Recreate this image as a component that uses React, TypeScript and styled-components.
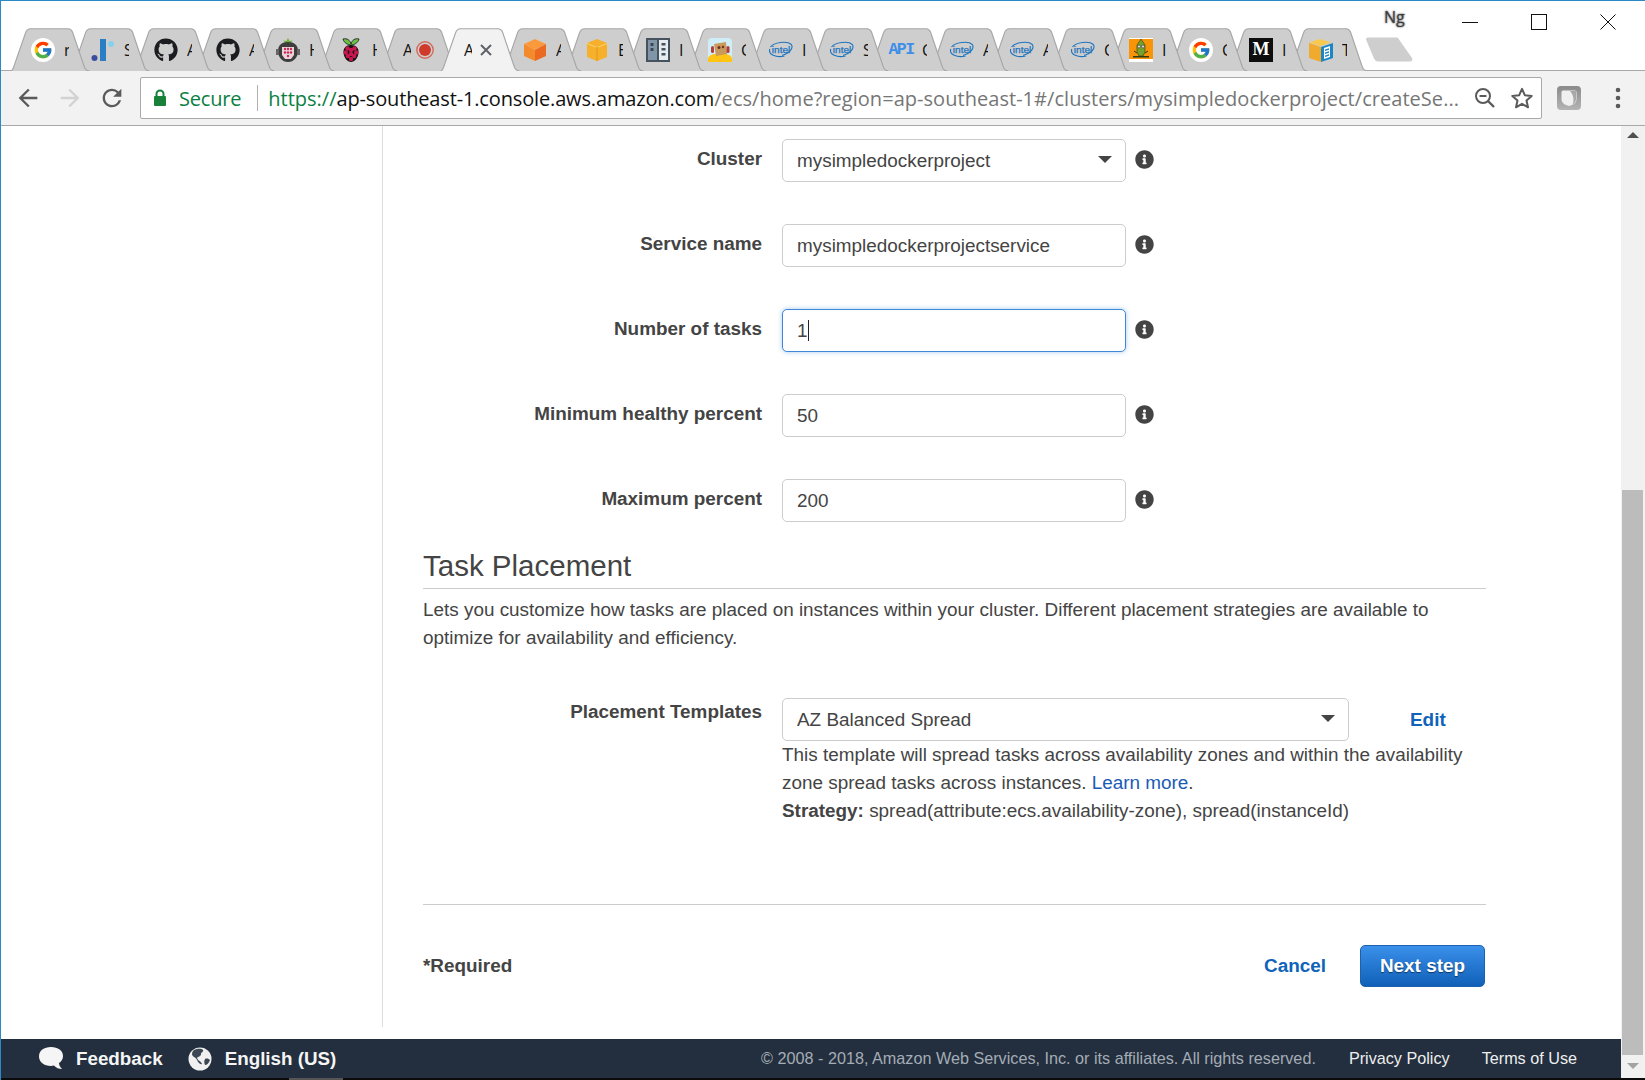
import React from "react";
import styled, { createGlobalStyle } from "styled-components";
import { FaGithub, FaInfoCircle } from "react-icons/fa";
import { FcGoogle } from "react-icons/fc";

const Global = createGlobalStyle`
  html, body { margin: 0; padding: 0; background: #fff; overflow: hidden; }
  * { box-sizing: border-box; }
`;

const Window = styled.div`
  width: 1645px; height: 1080px; display: flex; flex-direction: column;
  border-top: 1px solid #2a8ac5; border-left: 1px solid #2a8ac5; background: #fff;
  font-family: "Liberation Sans", Arial, sans-serif; color: #444; overflow: hidden;
`;
const TitleBar = styled.div`
  height: 70px; flex: none; display: flex; align-items: flex-end; position: relative;
  padding-left: 9px; background: #fff; border-bottom: 1px solid #a8a8a8;
`;
const TabStrip = styled.div`display: flex; align-items: flex-end; margin-bottom: -1px;`;
const TabBox = styled.div<{ $z: number; $gap: number; $after: number }>`
  position: relative; z-index: ${p => p.$z}; width: 80px; height: 43px; flex: none;
  margin-right: ${p => p.$after}px; display: flex; align-items: center; gap: ${p => p.$gap}px;
  padding: 0 0 0 21px; font-family: "Open Sans", sans-serif; font-size: 16px; color: #111;
  & > svg.shape { position: absolute; left: 0; top: 0; z-index: -1; }
`;
const TabLabel = styled.span<{ $w: number; $ml: number }>`
  display: block; width: ${p => p.$w}px; margin-left: ${p => p.$ml}px; overflow: hidden; white-space: nowrap; line-height: 20px; flex: none;
`;
const IconSlot = styled.span`width: 24px; height: 24px; flex: none; display: flex; align-items: center; justify-content: center;`;
const GoogleDisc = styled.span`
  width: 24px; height: 24px; border-radius: 50%; background: #fff; display: flex; align-items: center; justify-content: center;
`;
const NewTab = styled.svg`flex: none; margin: 0 0 8px 15px; position: relative; z-index: 30;`;
const Profile = styled.span`
  position: absolute; left: 1383px; top: 6px; font-family: "Open Sans", sans-serif; font-size: 16px; line-height: 20px;
  color: #3c3c3c; text-shadow: 0 0 2px #777, 0 0 2px #999;
`;
const WindowControls = styled.div`display: flex; margin-left: auto; margin-right: 3px; align-self: flex-start;`;
const WinBtn = styled.div`width: 69px; height: 42px; display: flex; align-items: center; justify-content: center;`;

const Toolbar = styled.div`
  height: 55px; flex: none; background: #f2f2f2; border-bottom: 1px solid #a8a8a8;
  display: flex; align-items: center; padding-left: 6px;
`;
const NavBtn = styled.div<{ $ml?: number }>`
  width: 42px; height: 42px; flex: none; display: flex; align-items: center; justify-content: center;
  margin-left: ${p => p.$ml ?? 0}px;
`;
const UrlBox = styled.div`
  width: 1402px; height: 42px; margin-left: 7px; flex: none; background: #fff; border: 1px solid #a9a9a9; border-radius: 2px;
  display: flex; align-items: center; padding-left: 12px; font-family: "Open Sans", sans-serif; font-size: 20px; white-space: nowrap;
`;
const Secure = styled.span`color: #0b8043; margin-left: 12px; letter-spacing: -0.2px;`;
const UrlDivider = styled.span`width: 1px; height: 26px; background: #b0b0b0; margin: 0 10px 0 16px;`;
const UrlScheme = styled.span`color: #0b8043;`;
const UrlHost = styled.span`color: #111; letter-spacing: -0.15px;`;
const UrlRest = styled.span`color: #767676; letter-spacing: 0.04px;`;
const UrlText = styled.span``;
const UrlIcons = styled.div`margin-left: auto; display: flex; align-items: center; gap: 14px; padding-right: 7px;`;

const Body = styled.div`flex: 1; display: flex; min-height: 0;`;
const MainColumn = styled.div`flex: 1; display: flex; flex-direction: column; min-width: 0;`;
const Content = styled.div`flex: 1; display: flex; padding-bottom: 12px; min-height: 0;`;
const Sidebar = styled.div`width: 382px; flex: none; border-right: 1px solid #ddd;`;
const Form = styled.div`width: 1063px; margin-left: 40px; padding-top: 13px; font-size: 18.9px; line-height: 28px;`;
const Row = styled.div<{ $top?: boolean }>`
  display: flex; align-items: ${p => (p.$top ? "flex-start" : "center")}; margin-bottom: ${p => (p.$top ? 0 : 42)}px;
  &:nth-child(5) { margin-bottom: 0; }
`;
const Label = styled.div<{ $top?: boolean }>`
  width: 339px; flex: none; text-align: right; font-weight: 700; font-size: 18.9px; color: #444; margin-right: 20px;
  line-height: 24px; padding-bottom: ${p => (p.$top ? 0 : 3)}px; padding-top: ${p => (p.$top ? 2 : 0)}px;
`;
const Field = styled.div<{ $focus?: boolean; $wide?: boolean }>`
  position: relative; width: ${p => (p.$wide ? 567 : 344)}px; height: 43px; flex: none; background: #fff;
  border: 1px solid ${p => (p.$focus ? "#3f87d8" : "#ccc")}; border-radius: 5px; padding-left: 14px; display: flex; align-items: center;
  font-size: 18.9px; color: #444; box-shadow: ${p => (p.$focus ? "0 0 5px rgba(63,135,216,.45)" : "none")};
`;
const Caret = styled.span`
  position: absolute; right: 13px; top: 16px; width: 0; height: 0;
  border-left: 7px solid transparent; border-right: 7px solid transparent; border-top: 7px solid #444;
`;
const TextCursor = styled.span`width: 1px; height: 21px; background: #222; margin-left: 0;`;
const InfoSlot = styled.span`margin: 0 0 3px 9px; display: flex; color: #444; font-size: 19px;`;
const Heading = styled.h2`
  margin: 23px 0 0; font-weight: 400; font-size: 29.5px; line-height: 41px; height: 44px; color: #444; border-bottom: 1px solid #ccc;
`;
const Para = styled.p`margin: 7px 0 46px; width: 1010px; color: #444;`;
const SelectCol = styled.div`width: 567px; flex: none;`;
const HelpText = styled.div`color: #444; white-space: nowrap;`;
const Strong = styled.strong`font-weight: 700;`;
const Learn = styled.span`color: #1a5bb5;`;
const EditLink = styled.span`margin: 8px 0 0 61px; color: #0f63b9; font-weight: 700;`;
const Rule = styled.div`height: 1px; background: #ccc; margin-top: 79px;`;
const Actions = styled.div`display: flex; align-items: center; margin-top: 40px;`;
const Required = styled.span`font-weight: 700; color: #444;`;
const CancelLink = styled.span`margin-left: auto; color: #0f63b9; font-weight: 700;`;
const NextButton = styled.div`
  width: 125px; height: 42px; margin: 0 1px 0 34px; border-radius: 5px; border: 1px solid #1a62ae;
  background: linear-gradient(#3a90ea, #1060b8); color: #fff; font-weight: 700; display: flex; align-items: center; justify-content: center;
  text-shadow: 0 1px 1px rgba(0,0,0,.5);
`;
const Footer = styled.div`
  height: 39px; flex: none; background: #232f3e; color: #f2f2f2; display: flex; align-items: center; font-size: 18.8px; padding-left: 37px;
`;
const FootItem = styled.span<{ $ml?: number }>`font-weight: 700; margin-left: ${p => p.$ml ?? 0}px; color: #f5f5f5;`;
const FootIcon = styled.svg<{ $ml?: number }>`flex: none; margin-left: ${p => p.$ml ?? 0}px;`;
const Copyright = styled.span`margin-left: auto; font-size: 16.2px; color: #a4acb5;`;
const FootLink = styled.span<{ $ml: number }>`margin-left: ${p => p.$ml}px; color: #eee; font-size: 16.2px;`;
const FootEnd = styled.span`width: 44px; flex: none;`;
const Scrollbar = styled.div`
  width: 24px; flex: none; background: #f1f1f1; display: flex; flex-direction: column; align-items: center; position: relative;
`;
const ArrowUp = styled.span`
  margin-top: 6px; width: 0; height: 0; border-left: 6px solid transparent; border-right: 6px solid transparent; border-bottom: 6px solid #505050;
`;
const Thumb = styled.div`width: 21px; height: 565px; margin-top: 352px; margin-left: -2px; background: #bcbcbc;`;
const ArrowDown = styled.span`
  margin-top: 8px; width: 0; height: 0; border-left: 6px solid transparent; border-right: 6px solid transparent; border-top: 6px solid #a3a3a3;
`;
const Taskbar = styled.div`height: 2px; flex: none; background: #0b0b0b; padding-left: 288px;`;
const TaskItem = styled.div`width: 54px; height: 2px; background: #555;`;

/* ---------- tab icons ---------- */
const Google = () => <GoogleDisc><FcGoogle size={20} /></GoogleDisc>;
const Bars = () => (
  <svg width="24" height="24" viewBox="0 0 24 24">
    <circle cx="3.5" cy="20" r="3" fill="#3a4ea0" /><rect x="9" y="1" width="6" height="22" fill="#2a7fc4" /><circle cx="20" cy="6" r="3" fill="#85d0ee" />
  </svg>
);
const Github = () => <FaGithub size={24} color="#1b1c1f" />;
const Cooker = () => (
  <svg width="24" height="24" viewBox="0 0 24 24">
    <path d="M12 0l1.500 3 3-.5-2 3h-5l-2-3 3 .5z" fill="#6fb03a" />
    <path d="M12 4c6 0 10 3 10 9s-4 11-10 11S2 19 2 13s4-9 10-9z" fill="#3d3d3d" /><rect x="0" y="11" width="3" height="6" fill="#666" /><rect x="21" y="11" width="3" height="6" fill="#666" />
    <path d="M6 9h12v8l-3 4H9l-3-4z" fill="#ecd3d8" />
    {[[9, 11], [12, 11], [15, 11], [9, 14.5], [12, 14.5], [15, 14.5], [12, 18]].map(([x, y], i) => <circle key={i} cx={x} cy={y} r="1.200" fill="#cc2a5c" />)}
  </svg>
);
const Raspberry = () => (
  <svg width="20" height="24" viewBox="0 0 20 24">
    <path d="M10 7C7 7 3 5 2 1c4-1 7 1 8 5 1-4 4-6 8-5-1 4-5 6-8 6z" fill="#6cc04a" stroke="#111" strokeWidth=".8" />
    <path d="M10 7c5 0 8 3 7.500 8-.5 5-4 9-7.500 9s-7-4-7.500-9C2 10 5 7 10 7z" fill="#111" />
    {[[6.500, 10.500], [13.500, 10.500], [10, 12], [4.800, 14.500], [15.200, 14.500], [10, 16], [6.800, 18], [13.200, 18], [10, 21]].map(([x, y], i) => <circle key={i} cx={x} cy={y} r="2.200" fill="#c8174f" />)}
  </svg>
);
const RecordDot = () => (
  <svg width="18" height="18" viewBox="0 0 18 18"><circle cx="9" cy="9" r="8.200" fill="none" stroke="#d26a5c" strokeWidth="1.400" /><circle cx="9" cy="9" r="6" fill="#cf3a2a" /></svg>
);
const Close = () => (
  <svg width="16" height="16" viewBox="0 0 16 16"><path d="M3 3l10 10M13 3L3 13" stroke="#5f6368" strokeWidth="2" /></svg>
);
const OrangeCube = () => (
  <svg width="24" height="24" viewBox="0 0 24 24"><path d="M12 1l11 5-11 6L1 6z" fill="#fb9a3c" /><path d="M1 6l11 6v11L1 18z" fill="#f58a2c" /><path d="M23 6l-11 6v11l11-5z" fill="#ea6a22" /></svg>
);
const YellowBox = () => (
  <svg width="24" height="24" viewBox="0 0 24 24"><path d="M12 1l10 4v14l-10 4L2 19V5z" fill="#f6b02c" /><path d="M2 5l10 4 10-4v1l-10 4L2 6z" fill="#fbd46e" /><rect x="11.200" y="9" width="1.600" height="14" fill="#e8a022" /></svg>
);
const Shelf = () => (
  <svg width="24" height="24" viewBox="0 0 24 24">
    <rect width="24" height="24" fill="#46535e" /><rect x="2" y="2" width="9" height="20" fill="#8096a8" /><rect x="13" y="2" width="9" height="20" fill="#e6ecef" />
    <rect x="4.500" y="5" width="3" height="3" fill="#3c4650" /><rect x="4.500" y="10" width="3" height="3" fill="#3c4650" />
    <rect x="15.500" y="5" width="4" height="2.500" fill="#46535e" /><rect x="15.500" y="10" width="4" height="2.500" fill="#46535e" /><rect x="15.500" y="15" width="4" height="2.500" fill="#46535e" />
  </svg>
);
const RobotTile = () => (
  <svg width="24" height="24" viewBox="0 0 24 24">
    <rect width="24" height="24" rx="4" fill="#cfeef8" /><path d="M0 24v-3c0-3 4-5 7-5h10c3 0 7 2 7 5v3z" fill="#ffc414" />
    <path d="M6 6l12-2 1 12-11 2z" fill="#c99a5c" /><rect x="3" y="8" width="3" height="7" rx="1.500" fill="#b33c3c" /><rect x="18.500" y="8" width="3" height="7" rx="1.500" fill="#b33c3c" />
    <circle cx="11" cy="9.500" r="1.500" fill="#703020" /><circle cx="15" cy="9" r="1.200" fill="#703020" />
  </svg>
);
const IntelMark = () => (
  <svg width="24" height="18" viewBox="0 0 24 18">
    <path d="M1.500 6C5 1.500 18-.5 22.300 3.500c2.500 3.500-2 9-9.300 11" fill="none" stroke="#1d74bd" strokeWidth="1.100" />
    <path d="M.8 8C-1 13.500 7 17 15.500 15" fill="none" stroke="#1d74bd" strokeWidth="1.100" />
    <text x="2.800" y="12" fontFamily="'Liberation Sans', sans-serif" fontSize="9.500" fill="#1d74bd" stroke="#1d74bd" strokeWidth=".25" textLength="18.500" lengthAdjust="spacingAndGlyphs">intel</text>
  </svg>
);
const ApiMark = styled.span`font-family: "Liberation Mono", monospace; font-weight: 700; font-size: 16.500px; color: #3d8fe8; letter-spacing: -1.500px; white-space: nowrap; line-height: 24px;`;
const GreenBot = () => (
  <svg width="24" height="24" viewBox="0 0 24 24">
    <rect width="24" height="24" fill="#fff" /><rect y="1" width="24" height="20" fill="#f89406" />
    <path d="M12 1l4 6v7l-2 4h-4l-2-4V7z" fill="#76a22c" stroke="#2b3a10" strokeWidth=".6" /><circle cx="10" cy="8.500" r="1.500" fill="#ddd" stroke="#222" strokeWidth=".5" /><circle cx="14" cy="8.500" r="1.500" fill="#ddd" stroke="#222" strokeWidth=".5" />
    <path d="M4 18h16v1.500H4z" fill="#2b3a10" /><path d="M5 13l3 2M19 13l-3 2" stroke="#2b3a10" />
  </svg>
);
const MediumTile = styled.span`
  width: 24px; height: 24px; background: #0e0e0e; color: #fff; display: flex; align-items: center; justify-content: center;
  font-family: "Liberation Serif", serif; font-weight: 700; font-size: 18px;
`;
const BlueBox = () => (
  <svg width="24" height="24" viewBox="0 0 24 24">
    <path d="M11 1l11 3.500L11 8 0 4.500z" fill="#f9c94e" /><path d="M0 5l12 4v15L0 20z" fill="#f0aa2e" /><path d="M12 9l12-4v15l-12 4z" fill="#1a86c8" />
    <path d="M15 10l6-2v11l-6 2z" fill="#fff" /><path d="M16 11.500l4-1.300v1.500l-4 1.300zM16 14.500l4-1.300v1.500l-4 1.300zM16 17.500l4-1.300v1.500l-4 1.300z" fill="#1a86c8" />
  </svg>
);

type TabDef = { icon: React.ReactNode; label: string; left: number; after?: boolean; active?: boolean };
const tabs: TabDef[] = [
  { left: 10, icon: <Google />, label: "r", after: true },
  { left: 70, icon: <Bars />, label: "S", after: true },
  { left: 133, icon: <Github />, label: "A", after: true },
  { left: 195, icon: <Github />, label: "A", after: true },
  { left: 255, icon: <Cooker />, label: "H", after: true },
  { left: 318, icon: <Raspberry />, label: "H", after: true },
  { left: 379, icon: <RecordDot />, label: "A" },
  { left: 440, icon: <Close />, label: "A", active: true },
  { left: 502, icon: <OrangeCube />, label: "A", after: true },
  { left: 564, icon: <YellowBox />, label: "E", after: true },
  { left: 625, icon: <Shelf />, label: "I", after: true },
  { left: 687, icon: <RobotTile />, label: "C", after: true },
  { left: 748, icon: <IntelMark />, label: "I", after: true },
  { left: 809, icon: <IntelMark />, label: "S", after: true },
  { left: 868, icon: <ApiMark>API</ApiMark>, label: "C", after: true },
  { left: 929, icon: <IntelMark />, label: "A", after: true },
  { left: 989, icon: <IntelMark />, label: "A", after: true },
  { left: 1050, icon: <IntelMark />, label: "C", after: true },
  { left: 1108, icon: <GreenBot />, label: "I", after: true },
  { left: 1168, icon: <Google />, label: "C", after: true },
  { left: 1228, icon: <MediumTile>M</MediumTile>, label: "I", after: true },
  { left: 1288, icon: <BlueBox />, label: "T", after: true },
];

const Tab = ({ def, z, after }: { def: TabDef; z: number; after: number }) => (
  <TabBox $z={def.active ? 25 : z} $gap={def.after ? 9 : 2} $after={after}>
    <svg className="shape" width="80" height="43" viewBox="0 0 80 43">
      <path
        d="M0.500 43 C1.500 43 2.500 42 3.500 39.500 L15.500 5 C16.500 2 18 .8 20.500 .8 L58 .8 C60 .8 61.500 1.500 62.500 4 L74 38 C75 41.500 76.500 43 79.500 43"
        fill={def.active ? "#f2f2f2" : "#cecece"} stroke="#a6a6a6" strokeWidth="1.100"
      />
    </svg>
    {def.after ? (
      <>
        <IconSlot>{def.icon}</IconSlot>
        <TabLabel $w={5} $ml={0}>{def.label}</TabLabel>
      </>
    ) : (
      <>
        <TabLabel $w={8} $ml={3}>{def.label}</TabLabel>
        <IconSlot>{def.icon}</IconSlot>
      </>
    )}
  </TabBox>
);

const iconGray = "#5a5a5a";
const Info = () => <InfoSlot><FaInfoCircle /></InfoSlot>;

export default function App() {
  return (
    <Window>
      <Global />
      <TitleBar>
        <TabStrip>
          {tabs.map((t, i) => (
            <Tab key={i} def={t} z={22 - i} after={(i < tabs.length - 1 ? tabs[i + 1].left - t.left : 61) - 80} />
          ))}
        </TabStrip>
        <NewTab width="50" height="25" viewBox="0 0 50 25">
          <path d="M2 2.500C2 1 3 .5 4 .5h28c1.500 0 2.500 .5 3 2L48 21c1 2 0 3.500-2 3.500H14c-2 0-3-1-4-3z" fill="#cecece" />
        </NewTab>
        <Profile>Ng</Profile>
        <WindowControls>
          <WinBtn>
            <svg width="16" height="16" viewBox="0 0 16 16"><path d="M0 8.500h16" stroke="#111" /></svg>
          </WinBtn>
          <WinBtn>
            <svg width="16" height="16" viewBox="0 0 16 16"><rect x=".5" y=".5" width="15" height="15" fill="none" stroke="#111" /></svg>
          </WinBtn>
          <WinBtn>
            <svg width="16" height="16" viewBox="0 0 16 16"><path d="M.5.5l15 15M15.500.5l-15 15" stroke="#111" /></svg>
          </WinBtn>
        </WindowControls>
      </TitleBar>
      <Toolbar>
        <NavBtn>
          <svg width="28" height="28" viewBox="0 0 24 24"><path d="M20 11H7.830l5.590-5.590L12 4l-8 8 8 8 1.410-1.410L7.830 13H20v-2z" fill={iconGray} /></svg>
        </NavBtn>
        <NavBtn>
          <svg width="28" height="28" viewBox="0 0 24 24"><path d="M4 11h12.170l-5.590-5.590L12 4l8 8-8 8-1.410-1.410L16.170 13H4v-2z" fill="#d2d2d2" /></svg>
        </NavBtn>
        <NavBtn>
          <svg width="28" height="28" viewBox="0 0 24 24"><path d="M17.650 6.350A7.958 7.958 0 0 0 12 4c-4.420 0-7.990 3.580-7.990 8s3.570 8 7.990 8c3.730 0 6.840-2.550 7.730-6h-2.080A5.990 5.990 0 0 1 12 18c-3.310 0-6-2.690-6-6s2.690-6 6-6c1.660 0 3.140.69 4.220 1.780L13 11h7V4l-2.350 2.350z" fill={iconGray} /></svg>
        </NavBtn>
        <UrlBox>
          <svg width="14" height="18" viewBox="0 0 14 18"><path d="M3.500 8V5a3.500 3.500 0 0 1 7 0v3" fill="none" stroke="#188038" strokeWidth="2" /><rect x="1" y="7" width="12" height="10" rx="1" fill="#188038" /></svg>
          <Secure>Secure</Secure>
          <UrlDivider />
          <UrlText>
            <UrlScheme>https://</UrlScheme><UrlHost>ap-southeast-1.console.aws.amazon.com</UrlHost><UrlRest>/ecs/home?region=ap-southeast-1#/clusters/mysimpledockerproject/createSe...</UrlRest>
          </UrlText>
          <UrlIcons>
            <svg width="22" height="22" viewBox="0 0 22 22"><circle cx="9" cy="9" r="7" fill="none" stroke={iconGray} strokeWidth="2" /><path d="M14 14l6 6" stroke={iconGray} strokeWidth="2.400" /><path d="M5.500 9h7" stroke={iconGray} strokeWidth="2" /></svg>
            <svg width="24" height="24" viewBox="0 0 24 24"><path d="M12 2.800l2.800 6.400 6.900.7-5.200 4.600 1.500 6.800-6-3.500-6 3.500 1.500-6.800-5.200-4.600 6.900-.7z" fill="none" stroke={iconGray} strokeWidth="2" strokeLinejoin="round" /></svg>
          </UrlIcons>
        </UrlBox>
        <NavBtn $ml={6}>
          <svg width="24" height="24" viewBox="0 0 24 24">
            <defs><linearGradient id="ext" x1="0" y1="0" x2="0" y2="1"><stop offset="0" stopColor="#8a8a8a" /><stop offset="1" stopColor="#b5b5b5" /></linearGradient></defs>
            <rect width="24" height="24" rx="4" fill="url(#ext)" /><path d="M4.500 6c0-1 1-1.500 2-1.500h11c1 0 2 .5 2 1.500v7c0 4-3.500 6-7.500 7-4-1-7.500-3-7.500-7z" fill="#f0f0f0" /><path d="M13 5h6v8c0 2-1 4-3.500 5.500 2-4.500 1-9.500-2.500-13.500z" fill="#a8a8a8" />
          </svg>
        </NavBtn>
        <NavBtn $ml={7}>
          <svg width="6" height="22" viewBox="0 0 6 22"><circle cx="3" cy="3" r="2.300" fill={iconGray} /><circle cx="3" cy="11" r="2.300" fill={iconGray} /><circle cx="3" cy="19" r="2.300" fill={iconGray} /></svg>
        </NavBtn>
      </Toolbar>
      <Body>
        <MainColumn>
          <Content>
            <Sidebar />
            <Form>
              <Row><Label>Cluster</Label><Field>mysimpledockerproject<Caret /></Field><Info /></Row>
              <Row><Label>Service name</Label><Field>mysimpledockerprojectservice</Field><Info /></Row>
              <Row><Label>Number of tasks</Label><Field $focus>1<TextCursor /></Field><Info /></Row>
              <Row><Label>Minimum healthy percent</Label><Field>50</Field><Info /></Row>
              <Row><Label>Maximum percent</Label><Field>200</Field><Info /></Row>
              <Heading>Task Placement</Heading>
              <Para>Lets you customize how tasks are placed on instances within your cluster. Different placement strategies are available to optimize for availability and efficiency.</Para>
              <Row $top>
                <Label $top>Placement Templates</Label>
                <SelectCol>
                  <Field $wide>AZ Balanced Spread<Caret /></Field>
                  <HelpText>This template will spread tasks across availability zones and within the availability</HelpText>
                  <HelpText>zone spread tasks across instances. <Learn>Learn more</Learn>.</HelpText>
                  <HelpText><Strong>Strategy:</Strong> spread(attribute:ecs.availability-zone), spread(instanceId)</HelpText>
                </SelectCol>
                <EditLink>Edit</EditLink>
              </Row>
              <Rule />
              <Actions>
                <Required>*Required</Required>
                <CancelLink>Cancel</CancelLink>
                <NextButton>Next step</NextButton>
              </Actions>
            </Form>
          </Content>
          <Footer>
            <FootIcon width="28" height="26" viewBox="0 0 28 26">
              <path d="M13 1c7 0 12 3.500 12 9 0 3-1.500 5.500-4 7 0 2 1 4 3 6-3 0-6-1-8-3.500-1 .3-2 .5-3 .5C6 20 1 16 1 10.500 1 4.500 6 1 13 1z" fill="#f5f5f5" />
            </FootIcon>
            <FootItem $ml={10}>Feedback</FootItem>
            <FootIcon $ml={25} width="24" height="24" viewBox="0 0 24 24">
              <circle cx="12" cy="12" r="11.500" fill="#f0f0f0" /><path d="M6 3c3-1 7-2 9 0 1 2-2 2-2 4 0 3-3 2-4 4 1 3 4 3 5 6-2 1-4-2-5-4-1-3-5-3-5-6 0-2 1-3 2-4zM17 12c2-1 4 0 5 1-1 3-3 5-5 5-1-2-1-4 0-6z" fill="#3c4654" />
            </FootIcon>
            <FootItem $ml={13}>English (US)</FootItem>
            <Copyright>© 2008 - 2018, Amazon Web Services, Inc. or its affiliates. All rights reserved.</Copyright>
            <FootLink $ml={33}>Privacy Policy</FootLink>
            <FootLink $ml={32}>Terms of Use</FootLink>
            <FootEnd />
          </Footer>
        </MainColumn>
        <Scrollbar>
          <ArrowUp />
          <Thumb />
          <ArrowDown />
        </Scrollbar>
      </Body>
      <Taskbar><TaskItem /></Taskbar>
    </Window>
  );
}
